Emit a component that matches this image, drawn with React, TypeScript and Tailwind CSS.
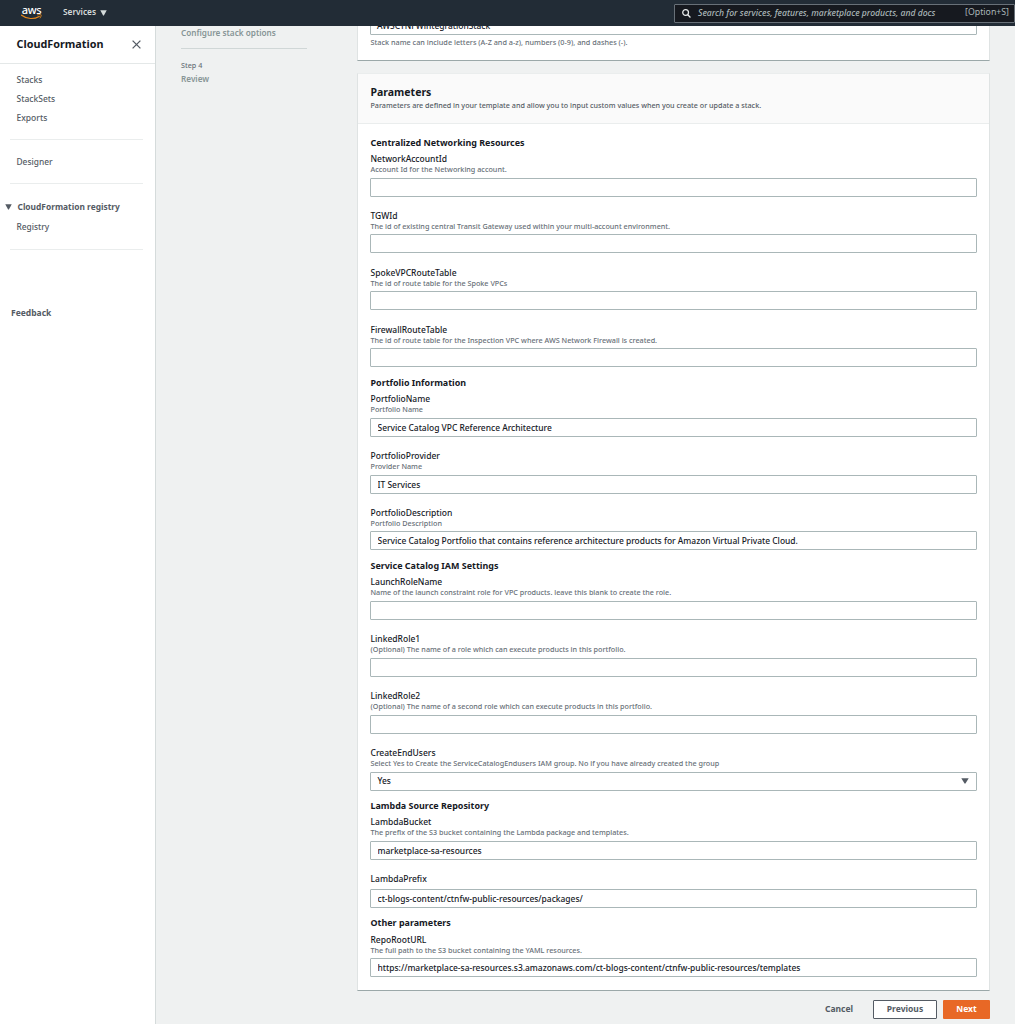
import { useState } from 'react';

interface Param {
  name: string;
  description?: string;
  value?: string;
  type?: 'text' | 'select';
}

interface ParamGroup {
  title: string;
  params: Param[];
}

const groups: ParamGroup[] = [
  {
    title: 'Centralized Networking Resources',
    params: [
      { name: 'NetworkAccountId', description: 'Account Id for the Networking account.' },
      { name: 'TGWId', description: 'The id of existing central Transit Gateway used within your multi-account environment.' },
      { name: 'SpokeVPCRouteTable', description: 'The id of route table for the Spoke VPCs' },
      { name: 'FirewallRouteTable', description: 'The id of route table for the Inspection VPC where AWS Network Firewall is created.' },
    ],
  },
  {
    title: 'Portfolio Information',
    params: [
      { name: 'PortfolioName', description: 'Portfolio Name', value: 'Service Catalog VPC Reference Architecture' },
      { name: 'PortfolioProvider', description: 'Provider Name', value: 'IT Services' },
      {
        name: 'PortfolioDescription',
        description: 'Portfolio Description',
        value: 'Service Catalog Portfolio that contains reference architecture products for Amazon Virtual Private Cloud.',
      },
    ],
  },
  {
    title: 'Service Catalog IAM Settings',
    params: [
      { name: 'LaunchRoleName', description: 'Name of the launch constraint role for VPC products. leave this blank to create the role.' },
      { name: 'LinkedRole1', description: '(Optional) The name of a role which can execute products in this portfolio.' },
      { name: 'LinkedRole2', description: '(Optional) The name of a second role which can execute products in this portfolio.' },
      {
        name: 'CreateEndUsers',
        description: 'Select Yes to Create the ServiceCatalogEndusers IAM group. No if you have already created the group',
        value: 'Yes',
        type: 'select',
      },
    ],
  },
  {
    title: 'Lambda Source Repository',
    params: [
      { name: 'LambdaBucket', description: 'The prefix of the S3 bucket containing the Lambda package and templates.', value: 'marketplace-sa-resources' },
      { name: 'LambdaPrefix', value: 'ct-blogs-content/ctnfw-public-resources/packages/' },
    ],
  },
  {
    title: 'Other parameters',
    params: [
      {
        name: 'RepoRootURL',
        description: 'The full path to the S3 bucket containing the YAML resources.',
        value: 'https://marketplace-sa-resources.s3.amazonaws.com/ct-blogs-content/ctnfw-public-resources/templates',
      },
    ],
  },
];

function Caret({ className }: { className: string }) {
  return (
    <svg viewBox="0 0 8 7" className={className} fill="currentColor" preserveAspectRatio="none">
      <path d="M0.3 0.3h7.4L4.6 6.2q-.6.9-1.2 0z" />
    </svg>
  );
}

function Field({ param }: { param: Param }) {
  const [value, setValue] = useState(param.value ?? '');

  return (
    <div>
      <label className="block h-[13px] pl-[0.5px] text-[8.5px] leading-[13px] font-medium text-[#16191f]">{param.name}</label>
      {param.description && (
        <p className="h-[9px] pl-[0.5px] text-[7.22px] leading-[9px] font-medium text-[#687078] whitespace-nowrap">{param.description}</p>
      )}
      {param.type === 'select' ? (
        <button className="mt-[3.5px] flex h-[19px] w-full items-center justify-between rounded-[1px] border border-[#aab7b8] bg-white pr-[7px] pl-[6.5px] text-[8.43px] font-medium text-[#16191f]">
          {value}
          <Caret className="h-[6px] w-[8px] text-[#545b64]" />
        </button>
      ) : (
        <input
          value={value}
          onChange={(e) => setValue(e.target.value)}
          className="mt-[3.5px] block h-[19px] w-full rounded-[1px] border border-[#aab7b8] bg-white px-[6.5px] text-[8.45px] font-medium text-[#16191f] outline-none"
        />
      )}
    </div>
  );
}

function TopBar() {
  return (
    <header className="relative z-10 flex h-[26px] shrink-0 items-center bg-[#222c36] text-[#d5dbdb]">
      <div className="ml-[21px] flex w-[21px] flex-col pb-0.5">
        <span className="h-[9px] text-center text-[11px] leading-[9px] font-medium tracking-[-0.3px] text-white">aws</span>
        <svg viewBox="0 0 21 6" className="h-[6px] w-[21px]" fill="none" stroke="#e8891c" strokeLinecap="round">
          <path d="M0.6 1.2c5.5 4.2 12.5 4.2 17.6 1.2" strokeWidth="1.2" />
          <path d="M16.6 0.8c1.8-.4 3.2-.4 3.5 0 .3.5-.2 2-1 3.2" strokeWidth="0.9" />
        </svg>
      </div>
      <button className="ml-[21px] flex items-center gap-[4px] pb-px text-[8.3px] font-semibold">
        Services
        <Caret className="h-[6px] w-[7px]" />
      </button>
      <div className="ml-auto flex h-[19px] w-[341px] items-center rounded-[1px] border border-[#687078] bg-[#16191f] pl-[7px] text-[8.6px] text-[#aab7b8]">
        <svg viewBox="0 0 10 10" className="h-[9px] w-[9px] text-[#eaeded]" fill="none" stroke="currentColor" strokeWidth="1.4">
          <circle cx="4" cy="4" r="3.2" />
          <path d="M6.4 6.4 9.4 9.4" />
        </svg>
        <span className="ml-[7px] font-medium italic whitespace-nowrap">Search for services, features, marketplace products, and docs</span>
        <span className="mr-[5px] ml-auto text-[8.75px] whitespace-nowrap">[Option+S]</span>
      </div>
    </header>
  );
}

function Sidebar() {
  return (
    <aside className="w-[156px] shrink-0 border-r border-[#d5dbdb] bg-white text-[8.4px] font-medium text-[#545b64]">
      <div className="flex h-[38px] items-center justify-between border-b border-[#e4e8e8] pr-3.5 pl-[16.5px]">
        <h2 className="text-[10.8px] font-bold text-[#16191f]">CloudFormation</h2>
        <svg viewBox="0 0 9 9" className="h-[9px] w-[9px]" stroke="currentColor" strokeWidth="1.3">
          <path d="M0.6 0.6 8.4 8.4M8.4 0.6 0.6 8.4" />
        </svg>
      </div>
      <nav className="pr-3 pl-2.5">
        <ul className="border-b border-[#eaeded] pt-[6px] pb-3 pl-[6.5px] text-[8.5px] leading-[19px]">
          <li>Stacks</li>
          <li>StackSets</li>
          <li>Exports</li>
        </ul>
        <p className="h-[44px] border-b border-[#eaeded] pl-[6.5px] leading-[43px]">Designer</p>
        <div className="h-[66px] border-b border-[#eaeded] pt-[13px] pl-[6.5px]">
          <p className="-ml-[12px] flex items-center gap-[6px] leading-[19px] font-bold">
            <Caret className="h-[6px] w-[7px]" />
            CloudFormation registry
          </p>
          <p className="leading-[22px]">Registry</p>
        </div>
      </nav>
      <p className="mt-[53px] pl-[11px] text-[8.5px] leading-[19px] font-bold">Feedback</p>
    </aside>
  );
}

export default function App() {
  return (
    <div className="flex h-screen flex-col overflow-hidden bg-[#eff1f1] font-['Noto_Sans',sans-serif]">
      <TopBar />
      <div className="flex min-h-0 flex-1">
        <Sidebar />

        {/* Wizard steps */}
        <div className="ml-[25px] w-[126px] shrink-0 text-[8.2px] font-semibold text-[#879596]">
          <p className="h-[23px] border-b border-[#d0d7d7] leading-[13px] whitespace-nowrap">Configure stack options</p>
          <p className="mt-[10px] text-[7.2px] leading-[13px] font-medium text-[#687078]">Step 4</p>
          <p className="leading-[13px]">Review</p>
        </div>

        <main className="ml-[50px] w-[633px] shrink-0">
          {/* Stack name, scrolled under the top bar */}
          <section className="flex h-[35px] flex-col border-x border-b border-x-[#dfe3e3] border-b-[#9ba8a9] bg-white px-3">
            <div className="-mt-[10px] h-[19px] shrink-0 rounded-[1px] border border-[#aab7b8] px-1.5 text-[8.43px] leading-[17px] font-medium text-[#16191f]">
              AWSCTNFWintegrationStack
            </div>
            <p className="mt-[3px] pl-[0.5px] text-[7.27px] leading-[9px] font-medium text-[#687078]">
              Stack name can include letters (A-Z and a-z), numbers (0-9), and dashes (-).
            </p>
          </section>

          <section className="mt-[11.5px] border border-x-[#dfe3e3] border-t-[#eaeded] border-b-[#9ba8a9] bg-white">
            <div className="h-[50px] border-b border-[#eaeded] bg-[#fafafa] px-[12.5px] pt-[11px]">
              <h1 className="text-[10.5px] leading-[14px] font-bold text-[#16191f]">Parameters</h1>
              <p className="text-[7.18px] leading-[13px] font-medium text-[#545b64]">
                Parameters are defined in your template and allow you to input custom values when you create or update a stack.
              </p>
            </div>
            <div className="flex flex-col gap-[7.6px] px-3 pt-[11.3px] pb-[12.5px]">
              {groups.map((group) => (
                <div key={group.title}>
                  <h3 className="mb-[1.3px] h-4 pl-[0.5px] text-[8.95px] leading-4 font-bold text-[#16191f]">{group.title}</h3>
                  <div className="flex flex-col gap-[12.4px]">
                    {group.params.map((param) => (
                      <Field key={param.name} param={param} />
                    ))}
                  </div>
                </div>
              ))}
            </div>
          </section>

          <div className="mt-[9px] flex items-center justify-end text-[8.5px] font-bold text-[#545b64]">
            <button className="mr-5">Cancel</button>
            <button className="mr-[6px] h-[19px] w-[64px] rounded-[1px] border border-[#545b64] bg-white">Previous</button>
            <button className="h-[19px] w-[47px] rounded-[1px] bg-[#e86826] text-white">Next</button>
          </div>
        </main>
      </div>
    </div>
  );
}
